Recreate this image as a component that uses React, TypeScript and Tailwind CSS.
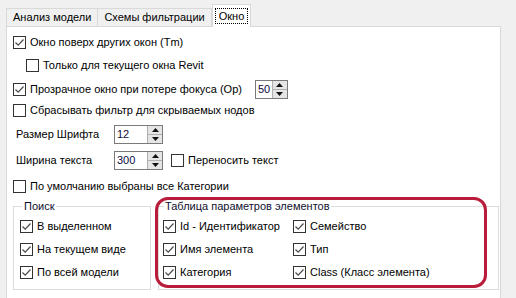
import React from 'react';

const font = { fontFamily: 'Tahoma, "Liberation Sans", "DejaVu Sans", sans-serif' };

function Box({ checked }: { checked?: boolean }) {
  return (
    <span className="inline-flex h-[13px] w-[13px] shrink-0 items-center justify-center border border-[#333333] bg-white">
      {checked && (
        <svg width="11" height="11" viewBox="0 0 11 11">
          <path d="M1.5 5.5 L4.2 8.2 L9.5 2.5" fill="none" stroke="#4a4a4a" strokeWidth="1.2" />
        </svg>
      )}
    </span>
  );
}

function Check({ label, checked, className = '' }: { label: string; checked?: boolean; className?: string }) {
  return (
    <div className={`flex items-center gap-[4px] ${className}`}>
      <Box checked={checked} />
      <span className="whitespace-nowrap">{label}</span>
    </div>
  );
}

function Spin({ value, w }: { value: string; w: string }) {
  return (
    <div className={`flex h-[19px] items-stretch border border-[#7a7a7a] bg-white ${w}`}>
      <div className="flex flex-1 items-center pl-[2px] text-[#0c0c40]">{value}</div>
      <div className="flex w-[15px] flex-col border-l border-[#b0b0b0]">
        <div className="flex flex-1 items-center justify-center bg-[#e5e5e5] border-b border-[#b0b0b0]">
          <svg width="7" height="4" viewBox="0 0 7 4"><path d="M0 4 L3.5 0 L7 4 Z" fill="#111" /></svg>
        </div>
        <div className="flex flex-1 items-center justify-center bg-[#e5e5e5]">
          <svg width="7" height="4" viewBox="0 0 7 4"><path d="M0 0 L3.5 4 L7 0 Z" fill="#111" /></svg>
        </div>
      </div>
    </div>
  );
}

export default function App() {
  return (
    <div className="relative h-[298px] w-[516px] overflow-hidden bg-[#f0f0f0] text-[11px] text-black" style={font}>
      {/* tabs */}
      <div className="flex h-[26px] items-end pl-[6px]">
        <div className="flex h-[18px] items-center border border-b-0 border-[#d9d9d9] px-[6px]">Анализ модели</div>
        <div className="flex h-[18px] items-center border border-b-0 border-l-0 border-[#d9d9d9] px-[6px]">Схемы фильтрации</div>
        <div className="relative z-10 -mb-px flex h-[23px] items-center border border-b-0 border-[#d9d9d9] bg-white px-[2px]">
          <span className="border border-dotted border-black px-[3px] leading-[14px]">Окно</span>
        </div>
      </div>

      {/* panel */}
      <div className="ml-[6px] h-[300px] w-[495px] border border-[#d9d9d9] bg-white pl-[6px] pt-[5px]">
        <div className="flex h-[20px] items-center">
          <Check checked label="Окно поверх других окон (Tm)" />
        </div>
        <div className="mt-[3px] flex h-[20px] items-center pl-[13px]">
          <Check label="Только для текущего окна Revit" />
        </div>
        <div className="mt-[4px] flex h-[20px] items-center">
          <Check checked label="Прозрачное окно при потере фокуса (Op)" />
          <div className="ml-[13px]">
            <Spin value="50" w="w-[33px]" />
          </div>
        </div>
        <div className="mt-[1px] flex h-[20px] items-center">
          <Check label="Сбрасывать фильтр для скрываемых нодов" />
        </div>
        <div className="mt-[4px] flex h-[20px] items-center">
          <span className="w-[101px] pl-[3px]">Размер Шрифта</span>
          <Spin value="12" w="w-[49px]" />
        </div>
        <div className="mt-[6px] flex h-[20px] items-center">
          <span className="w-[101px] pl-[3px]">Ширина текста</span>
          <Spin value="300" w="w-[49px]" />
          <Check label="Переносить текст" className="ml-[8px]" />
        </div>
        <div className="mt-[6px] flex h-[20px] items-center">
          <Check label="По умолчанию выбраны все Категории" />
        </div>

        <div className="mt-[2px] flex gap-[7px]">
          <fieldset className="h-[92px] w-[138px] border border-[#dcdcdc] px-[6px]">
            <legend className="ml-[2px] px-[2px] text-[#101030]">Поиск</legend>
            <div className="flex flex-col gap-[6px] pt-[3px]">
              <Check checked label="В выделенном" className="h-[17px]" />
              <Check checked label="На текущем виде" className="h-[17px]" />
              <Check checked label="По всей модели" className="h-[17px]" />
            </div>
          </fieldset>
          <fieldset className="h-[92px] w-[341px] border border-[#dcdcdc] px-[4px]">
            <legend className="ml-[1px] px-[1px] text-[#101030]">Таблица параметров элементов</legend>
            <div className="grid grid-cols-[130px_1fr] gap-y-[6px] pt-[3px]">
              <Check checked label="Id - Идентификатор" className="h-[17px]" />
              <Check checked label="Семейство" className="h-[17px]" />
              <Check checked label="Имя элемента" className="h-[17px]" />
              <Check checked label="Тип" className="h-[17px]" />
              <Check checked label="Категория" className="h-[17px]" />
              <Check checked label="Class (Класс элемента)" className="h-[17px]" />
            </div>
          </fieldset>
        </div>
      </div>

      {/* annotation */}
      <div className="pointer-events-none absolute left-[155px] top-[197px] h-[91px] w-[332px] rounded-[13px] border-[3px] border-[#b81c3a]" />
    </div>
  );
}
